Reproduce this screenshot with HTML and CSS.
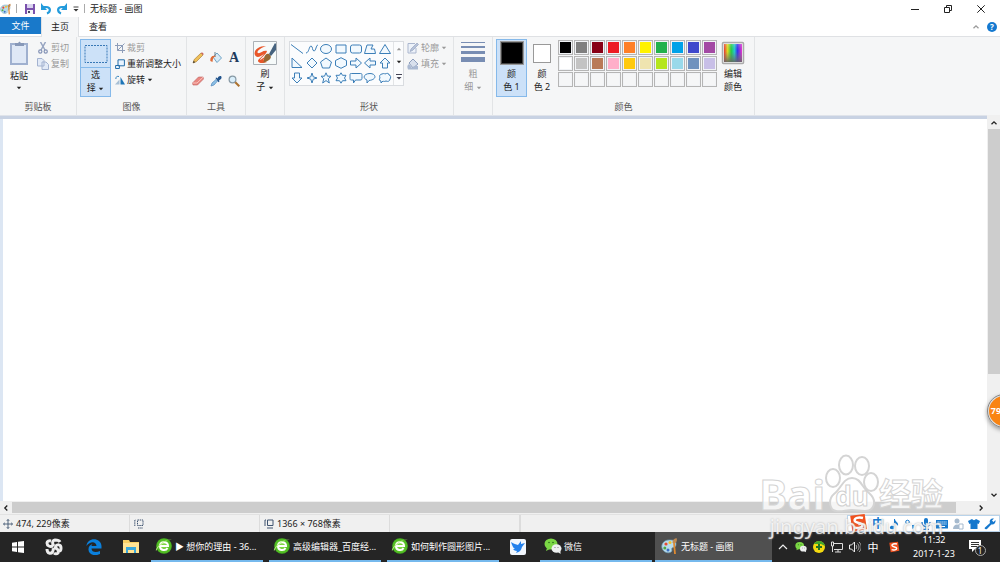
FILE: index.html
```html
<!DOCTYPE html>
<html lang="zh-CN">
<head>
<meta charset="utf-8">
<meta name="viewport" content="width=device-width, initial-scale=1">
<title>无标题 - 画图</title>
<link rel="stylesheet" href="styles.css">
</head>
<body>
<svg class="defs" aria-hidden="true">
  <defs>
    <linearGradient id="spectrum"><stop offset="0" stop-color="#e33"/><stop offset=".2" stop-color="#dd2"/><stop offset=".4" stop-color="#2c4"/><stop offset=".58" stop-color="#2cc"/><stop offset=".75" stop-color="#33e"/><stop offset="1" stop-color="#e3c"/></linearGradient>
    <linearGradient id="shade" x2="0" y2="1"><stop offset="0" stop-color="#fff" stop-opacity=".2"/><stop offset=".4" stop-color="#777" stop-opacity="0"/><stop offset="1" stop-color="#666" stop-opacity=".9"/></linearGradient>
    <radialGradient id="green"><stop offset="0" stop-color="#8fe04c"/><stop offset="1" stop-color="#45b51c"/></radialGradient>
    <symbol id="palette" viewBox="0 0 18 18">
      <path d="M8 3C3 3 0 7 1 11s6 6 9 4c2-1 0-3 1-4s4 0 4-4-4-4-7-4z" fill="#b8dcec" stroke="#6e9db8" stroke-width=".7"/>
      <circle cx="5" cy="7" r="1.600" fill="#e64a33"/><circle cx="9" cy="5.500" r="1.500" fill="#f3c22b"/><circle cx="3.800" cy="11" r="1.500" fill="#51a845"/><circle cx="7" cy="13" r="1.500" fill="#3a6fc5"/>
      <path d="M13 6l1 11" stroke="#e08b31" stroke-width="1.800"/><path d="M11.500 6c0-3 1-4 4-5 1 2 0 4-1 5z" fill="#c18a51"/>
    </symbol>
    <symbol id="browser" viewBox="0 0 18 18">
      <circle cx="9" cy="9" r="7.800" fill="url(#green)"/><path d="M5 9h8c0-5-8-5-8 0s6 5 7.500 2" fill="none" stroke="#fff" stroke-width="2"/><path d="M1 14C0 10 10 2 17 2c-4 0-12 4-16 12z" fill="#b8ef7d"/>
    </symbol>
    <symbol id="wechat" viewBox="0 0 18 18">
      <ellipse cx="7" cy="7" rx="6.500" ry="5.500" fill="#7bd745"/><path d="M3 11l-1 3 4-2z" fill="#7bd745"/><circle cx="5" cy="5.500" r=".8" fill="#276b18"/><circle cx="9" cy="5.500" r=".8" fill="#276b18"/>
      <ellipse cx="12.500" cy="11.500" rx="5" ry="4.300" fill="#eef0f0"/><path d="M14 15l2.500 2V14z" fill="#eef0f0"/><circle cx="11" cy="10.500" r=".6" fill="#777"/><circle cx="14" cy="10.500" r=".6" fill="#777"/>
    </symbol>
    <symbol id="sogou" viewBox="0 0 18 18">
      <path d="M2 2.500L15 1l2 13.500L4 17z" fill="#f0511f"/><path d="M13.500 4.500c-4-1-8 0-7.500 2.500s7 1.500 7 4-4 3-7.500 2" fill="none" stroke="#fff" stroke-width="2.200"/>
    </symbol>
    <symbol id="caret" viewBox="0 0 6 4"><path d="M.8.7h4.400L3 3.300z" fill="currentColor"/></symbol>
    <symbol id="up" viewBox="0 0 8 8"><path d="M1.500 5.300L4 2.800l2.500 2.500" fill="none" stroke="currentColor" stroke-width="1.300"/></symbol>
  </defs>
</svg>

<div class="app">
  <header class="titlebar">
    <div class="quick">
      <svg class="i12"><use href="#palette"/></svg>
      <span class="bar"></span>
      <button class="plain" aria-label="保存"><svg class="i12" viewBox="0 0 12 12"><path d="M1 1h10v10H1z" fill="#7b51ad"/><path d="M3 1h6v4H3z" fill="#d9d3ee"/><path d="M3 7h6v4H3z" fill="#f3f3f6"/><path d="M4 8h2v2H4z" fill="#484a60"/></svg></button>
      <button class="plain" aria-label="撤消"><svg class="i12" viewBox="0 0 12 12"><path d="M3 4h3c5 0 5 5 1 6.500" fill="none" stroke="#239bdc" stroke-width="2.200"/><path d="M1 0v7h6z" fill="#239bdc"/></svg></button>
      <button class="plain" aria-label="重做"><svg class="i12" viewBox="0 0 12 12"><path d="M9 4H6c-5 0-5 5-1 6.500" fill="none" stroke="#239bdc" stroke-width="2.200"/><path d="M11 0v7H5z" fill="#239bdc"/></svg></button>
      <button class="plain" aria-label="自定义快速访问工具栏"><svg class="i8" viewBox="0 0 8 8"><path d="M1.500 2h5" stroke="#444"/><path d="M1.500 4h5L4 6.500z" fill="#333"/></svg></button>
      <span class="bar"></span>
    </div>
    <h1 class="title">无标题 - 画图</h1>
    <div class="window-buttons">
      <button class="plain" aria-label="最小化"><svg class="i10" viewBox="0 0 10 10"><path d="M1 5.500h8" stroke="#222"/></svg></button>
      <button class="plain" aria-label="还原"><svg class="i10" viewBox="0 0 10 10"><path d="M1.500 3.500h5v5h-5zM3.500 3V1.500h5v5H7" fill="none" stroke="#222"/></svg></button>
      <button class="plain" aria-label="关闭"><svg class="i10" viewBox="0 0 10 10"><path d="M1.300 1.300l7.400 7.400M8.700 1.300L1.300 8.700" stroke="#222"/></svg></button>
    </div>
  </header>

  <nav class="tabs">
    <button class="tab file">文件</button>
    <button class="tab current">主页</button>
    <button class="tab">查看</button>
    <div class="tab-tools">
      <button class="plain muted" aria-label="折叠功能区"><svg class="i8"><use href="#up"/></svg></button>
      <button class="help" aria-label="帮助">?</button>
    </div>
  </nav>

  <section class="ribbon">
    <div class="group clipboard">
      <div class="tools">
        <button class="big paste"><svg class="i24" viewBox="0 0 24 24"><path d="M3 2h18v22H3z" fill="#9fb0cf"/><path d="M5 4h14v18H5z" fill="#dfe8f6"/><path d="M8 2h3l1.500-1.500L14 2h3v3H8z" fill="#8798b8"/></svg><span>粘贴</span><svg class="caret"><use href="#caret"/></svg></button>
        <div class="stack">
          <button class="row muted"><svg class="i12" viewBox="0 0 12 12"><path d="M3.500 0L8 8M8.500 0L4 8" stroke="#96a4c1" stroke-width="1.500"/><circle cx="3.300" cy="9.500" r="1.600" fill="none" stroke="#8392b5" stroke-width="1.200"/><circle cx="8.700" cy="9.500" r="1.600" fill="none" stroke="#8392b5" stroke-width="1.200"/></svg>剪切</button>
          <button class="row muted"><svg class="i12" viewBox="0 0 12 12"><path d="M.5.500H5L7 2.500V8H.5zM5 4h4l2.500 2.500v5H5z" fill="#e2eaf7" stroke="#a3b2d0"/></svg>复制</button>
        </div>
      </div>
      <h2>剪贴板</h2>
    </div>

    <div class="group image">
      <div class="tools">
        <button class="big selected split"><span class="face"><svg class="i24" viewBox="0 0 24 24"><path d="M1 3.500h22v17H1z" fill="none" stroke="#3878b6" stroke-dasharray="2 1"/></svg></span><span>选<br>择 <svg class="caret"><use href="#caret"/></svg></span></button>
        <div class="stack">
          <button class="row muted"><svg class="i10" viewBox="0 0 10 10"><path d="M2.500 0v7.500H10M0 2.500h7.500V10M9.500.5l-7 7" fill="none" stroke="#8d9db9"/></svg>裁剪</button>
          <button class="row"><svg class="i10" viewBox="0 0 10 10"><path d="M3 .8h6.400v6H3zM.6 6.500h3.800v3H.6z" fill="#e9f4ff" stroke="#236da8"/></svg>重新调整大小</button>
          <button class="row"><svg class="i10" viewBox="0 0 10 10"><path d="M5.500 2L10 9.500H5.500z" fill="#1c75b8"/><path d="M4.500 4.500v5H0z" fill="#a7bfd5"/><path d="M.8 4C1 1.500 2 1 4 1.500" fill="none" stroke="#3683bc"/></svg>旋转<svg class="caret"><use href="#caret"/></svg></button>
        </div>
      </div>
      <h2>图像</h2>
    </div>

    <div class="group toolset">
      <div class="tools tool-grid">
        <button class="plain" aria-label="铅笔"><svg class="i12" viewBox="0 0 12 12"><path d="M1 11l1.200-3.500L9 1l2 2-6.700 6.700z" fill="#efc05a" stroke="#a1742c" stroke-width=".6"/><path d="M1 11l.7-2.200 1.500 1.500z" fill="#333"/><path d="M9 1l2 2 .8-1L10 .2z" fill="#cc605b"/></svg></button>
        <button class="plain" aria-label="用颜色填充"><svg class="i12" viewBox="0 0 12 12"><path d="M3 5l4-4 4.500 5L7 10.500z" fill="#d9eaf5" stroke="#5090bb" stroke-width=".8"/><path d="M5 0v5" stroke="#67818e"/><path d="M.3 9C0 5 2 3 6 4 3 5 3 7 2.500 10z" fill="#df6b38"/></svg></button>
        <button class="plain letter" aria-label="文本">A</button>
        <button class="plain" aria-label="橡皮擦"><svg class="i12" viewBox="0 0 12 12"><path d="M.5 8l6-6H11l.5 2-6 6H1z" fill="#e98882" stroke="#be625e" stroke-width=".6"/><path d="M.5 8h4.500l6.200-6" fill="none" stroke="#fac1bb"/></svg></button>
        <button class="plain" aria-label="颜色选取器"><svg class="i12" viewBox="0 0 12 12"><path d="M1 11l1-3 4-3.500 1.500 1.500L4 10z" fill="#8cc0e6" stroke="#538abb" stroke-width=".7"/><path d="M5.500 3l1-.5 1 1C9-.5 13 1 11 4L9 5.500l.5 1-1 .8z" fill="#21538c"/></svg></button>
        <button class="plain" aria-label="放大镜"><svg class="i12" viewBox="0 0 12 12"><circle cx="4.500" cy="4.500" r="3.400" fill="#d9eefa" stroke="#8799a5" stroke-width="1.200"/><path d="M7.300 7.300l4 4" stroke="#ad722e" stroke-width="2"/></svg></button>
      </div>
      <h2>工具</h2>
    </div>

    <div class="group brush">
      <div class="tools">
        <button class="big"><svg class="i24" viewBox="0 0 24 24"><path d="M.5.500h23v23H.5z" fill="#f6fafa" stroke="#abb1b6"/><path d="M13 5C5 5 0 10 2 14s6 1 9-1c-2 3-6 5-6 7s5 3 9 1c-4-1-4-3-2-5-3 1-4 3-5 3 1-3 6-5 7-9-4-1-7 3-9 2s2-5 8-7z" fill="#e9572a"/><path d="M11 18c0-4 3-6 5-5s3 4 0 6-5 2-7 3c2-1 2-2 2-4z" fill="#956833"/><path d="M16 13l6-11 1 1v6l-5 6z" fill="#46637f"/></svg><span>刷<br>子 <svg class="caret"><use href="#caret"/></svg></span></button>
      </div>
      <h2></h2>
    </div>

    <div class="group shapes">
      <div class="tools">
        <div class="gallery">
          <div class="shape-grid">
            <button class="plain" aria-label="直线"><svg class="shape" viewBox="0 0 14 12"><path d="M1 1.500l12 9"/></svg></button>
            <button class="plain" aria-label="曲线"><svg class="shape" viewBox="0 0 14 12"><path class="open" d="M1 10c3 0 3-7 5-7s1 5 3 5 2-6 4-6"/></svg></button>
            <button class="plain" aria-label="椭圆形"><svg class="shape" viewBox="0 0 14 12"><ellipse cx="7" cy="6" rx="5.500" ry="4.500"/></svg></button>
            <button class="plain" aria-label="矩形"><svg class="shape" viewBox="0 0 14 12"><path d="M2 2h10v8H2z"/></svg></button>
            <button class="plain" aria-label="圆角矩形"><svg class="shape" viewBox="0 0 14 12"><rect x="1.500" y="2" width="11" height="8" rx="2"/></svg></button>
            <button class="plain" aria-label="多边形"><svg class="shape" viewBox="0 0 14 12"><path d="M4 2h6L8 6h3.500l1 4.500h-11z"/></svg></button>
            <button class="plain" aria-label="三角形"><svg class="shape" viewBox="0 0 14 12"><path d="M7 1.500l5.500 9h-11z"/></svg></button>
            <button class="plain" aria-label="直角三角形"><svg class="shape" viewBox="0 0 14 12"><path d="M2 1l10 9.500H2z"/></svg></button>
            <button class="plain" aria-label="菱形"><svg class="shape" viewBox="0 0 14 12"><path d="M7 1l5 5-5 5-5-5z"/></svg></button>
            <button class="plain" aria-label="五边形"><svg class="shape" viewBox="0 0 14 12"><path d="M7 1l5.500 4-2 6h-7l-2-6z"/></svg></button>
            <button class="plain" aria-label="六边形"><svg class="shape" viewBox="0 0 14 12"><path d="M7 .7l5.500 2.800v5L7 11.300 1.500 8.500v-5z"/></svg></button>
            <button class="plain" aria-label="右箭头"><svg class="shape" viewBox="0 0 14 12"><path d="M1.500 4H7V1l5.500 5L7 11V8H1.500z"/></svg></button>
            <button class="plain" aria-label="左箭头"><svg class="shape" viewBox="0 0 14 12"><path d="M12.500 4H7V1L1.500 6 7 11V8h5.500z"/></svg></button>
            <button class="plain" aria-label="上箭头"><svg class="shape" viewBox="0 0 14 12"><path d="M7 1l5 5H9.500v5h-5V6H2z"/></svg></button>
            <button class="plain" aria-label="下箭头"><svg class="shape" viewBox="0 0 14 12"><path d="M7 11l5-5H9.500V1h-5v5H2z"/></svg></button>
            <button class="plain" aria-label="四角星形"><svg class="shape" viewBox="0 0 14 12"><path d="M7 1l1.200 3.800L12 6 8.200 7.200 7 11 5.800 7.200 2 6l3.800-1.200z"/></svg></button>
            <button class="plain" aria-label="五角星形"><svg class="shape" viewBox="0 0 14 12"><path d="M7 .8l1.500 3.400H12L9.300 6.800l1 4.200L7 8.600 3.700 11l1-4.200L2 4.200h3.500z"/></svg></button>
            <button class="plain" aria-label="六角星形"><svg class="shape" viewBox="0 0 14 12"><path d="M7 .8l1.500 2.500H12L10.500 6 12 8.700H8.500L7 11.200 5.500 8.700H2L3.500 6 2 3.300h3.500z"/></svg></button>
            <button class="plain" aria-label="圆角矩形标注"><svg class="shape" viewBox="0 0 14 12"><path d="M3 1.500h8c2 0 2 0 2 3s0 3.500-2 3.500H6.500L4.500 11V8H3c-2 0-2 0-2-3.500s0-3 2-3z"/></svg></button>
            <button class="plain" aria-label="椭圆形标注"><svg class="shape" viewBox="0 0 14 12"><path d="M6 8.500L4 11V8C-1 6 1 1.500 7 1.500s7.500 6-1 7z"/></svg></button>
            <button class="plain" aria-label="云形标注"><svg class="shape" viewBox="0 0 14 12"><path d="M4 2c2-1 3 0 3 0 2-1 4-1 4 1 2 0 2 3 1 4 0 2-2 3-4 2-2 1-3 0-3 0l-2 2V9C1 9 1 7 2 6 1 4 2 2 4 2z"/></svg></button>
          </div>
          <div class="gallery-scroll">
            <button class="plain muted" aria-label="上一行"><svg class="caret flip"><use href="#caret"/></svg></button>
            <button class="plain" aria-label="下一行"><svg class="caret"><use href="#caret"/></svg></button>
            <button class="plain" aria-label="更多形状"><svg class="i8" viewBox="0 0 8 8"><path d="M1 1.500h6" stroke="#445"/><path d="M1.500 4h5L4 6.500z" fill="#445"/></svg></button>
          </div>
        </div>
        <div class="stack">
          <button class="row muted"><svg class="i12" viewBox="0 0 12 12"><path d="M8 1.500H1v9.500h8V6" fill="#edf2f9" stroke="#aab6ce"/><path d="M3 9.500L4 7l6-6 1.500 1.500-6 6z" fill="#b6c2d9" stroke="#8e9dba" stroke-width=".6"/></svg>轮廓<svg class="caret"><use href="#caret"/></svg></button>
          <button class="row muted"><svg class="i12" viewBox="0 0 12 12"><path d="M2 5l4-4 5 5-5 4z" fill="#d8e0ed" stroke="#8e9fbe"/><path d="M1 11.500h10V8H7L5 10 2 6C0 7 0 9 1 11.500z" fill="#aab9d2"/></svg>填充<svg class="caret"><use href="#caret"/></svg></button>
        </div>
      </div>
      <h2>形状</h2>
    </div>

    <div class="group size">
      <div class="tools">
        <button class="big muted"><svg class="i24" viewBox="0 0 24 24"><path d="M0 1h24v1H0zM0 5h24v2H0zM0 10h24v3H0zM0 16h24v5H0z" fill="#788db3"/></svg><span>粗<br>细 <svg class="caret"><use href="#caret"/></svg></span></button>
      </div>
      <h2></h2>
    </div>

    <div class="group colors">
      <div class="tools">
        <button class="big selected"><span class="well black"></span><span>颜<br>色 1</span></button>
        <button class="big second"><span class="well-box"><span class="well white"></span></span><span>颜<br>色 2</span></button>
        <div class="swatches">
          <button class="swatch c-black" aria-label="黑色"></button><button class="swatch c-gray" aria-label="灰色"></button><button class="swatch c-maroon" aria-label="深红色"></button><button class="swatch c-red" aria-label="红色"></button><button class="swatch c-orange" aria-label="橙色"></button><button class="swatch c-yellow" aria-label="黄色"></button><button class="swatch c-green" aria-label="绿色"></button><button class="swatch c-sky" aria-label="青绿色"></button><button class="swatch c-indigo" aria-label="靛蓝色"></button><button class="swatch c-purple" aria-label="紫色"></button>
          <button class="swatch c-white" aria-label="白色"></button><button class="swatch c-silver" aria-label="浅灰色"></button><button class="swatch c-brown" aria-label="褐色"></button><button class="swatch c-rose" aria-label="玫瑰色"></button><button class="swatch c-gold" aria-label="金色"></button><button class="swatch c-cream" aria-label="浅黄色"></button><button class="swatch c-lime" aria-label="酸橙色"></button><button class="swatch c-aqua" aria-label="淡青绿色"></button><button class="swatch c-steel" aria-label="蓝灰色"></button><button class="swatch c-lilac" aria-label="淡紫色"></button>
          <button class="swatch" aria-label="自定义 1"></button><button class="swatch" aria-label="自定义 2"></button><button class="swatch" aria-label="自定义 3"></button><button class="swatch" aria-label="自定义 4"></button><button class="swatch" aria-label="自定义 5"></button><button class="swatch" aria-label="自定义 6"></button><button class="swatch" aria-label="自定义 7"></button><button class="swatch" aria-label="自定义 8"></button><button class="swatch" aria-label="自定义 9"></button><button class="swatch" aria-label="自定义 10"></button>
        </div>
        <button class="big"><svg class="i24" viewBox="0 0 24 24"><rect x="1.500" y="1.500" width="21" height="21" rx="1" fill="#eee" stroke="#aaa" stroke-width="1.500"/><path d="M3 3h18v18H3z" fill="url(#spectrum)"/><path d="M3 3h18v18H3z" fill="url(#shade)"/></svg><span>编辑<br>颜色</span></button>
      </div>
      <h2>颜色</h2>
    </div>
  </section>

  <main class="workspace">
    <div class="canvas-area"><div class="canvas"></div></div>
    <div class="vscroll">
      <button class="plain" aria-label="向上滚动"><svg class="i8"><use href="#up"/></svg></button>
      <div class="vtrack"><div class="vthumb"></div></div>
      <button class="plain" aria-label="向下滚动"><svg class="i8 flip"><use href="#up"/></svg></button>
    </div>
    <div class="hscroll">
      <button class="plain" aria-label="向左滚动"><svg class="i8 left"><use href="#up"/></svg></button>
      <div class="htrack"><div class="hthumb"></div></div>
      <button class="plain" aria-label="向右滚动"><svg class="i8 right"><use href="#up"/></svg></button>
    </div>
    <button class="speed-ball">79</button>
  </main>

  <footer class="status">
    <div class="cell"><svg class="i10" viewBox="0 0 10 10"><path d="M5 .5v9M.5 5h9M3.800 1.800L5 .5l1.200 1.300M3.800 8.200L5 9.500l1.200-1.300M1.800 3.800L.5 5l1.300 1.200M8.200 3.800L9.500 5 8.200 6.200" fill="none" stroke="#405571" stroke-width=".9"/></svg>474, 229像素</div>
    <div class="cell"><svg class="i10" viewBox="0 0 10 10"><path d="M.8 7V1h1M3.500 1H9v5.500H3.500zM4 9h5" fill="none" stroke="#405571" stroke-dasharray="1.500 .7"/></svg></div>
    <div class="cell"><svg class="i10" viewBox="0 0 10 10"><path d="M1 7V1h1M3.500 1H9v5.500H3.500zM3 9h6" fill="none" stroke="#405571"/></svg>1366 × 768像素</div>
    <div class="cell"></div>
    <div class="cell last"></div>
    <div class="ime">
      <svg class="ime-logo"><use href="#sogou"/></svg>
      <button class="plain ime-text">中</button>
      <button class="plain" aria-label="全半角"><svg class="i12" viewBox="0 0 12 12"><path d="M7 1c0 3 4 3 3 7-1-2-2-2-3-2v3c0 3-6 3-5 0 1-2 3-1 4-1V1z" fill="#1678cd"/></svg></button>
      <button class="plain" aria-label="标点"><svg class="i12" viewBox="0 0 12 12"><circle cx="3.500" cy="4" r="1.800" fill="none" stroke="#1678cd"/><path d="M8 7h2.500c.5 2-.5 3-2 4z" fill="#1678cd"/></svg></button>
      <button class="plain" aria-label="语音"><svg class="i12" viewBox="0 0 12 12"><rect x="4" y="0" width="4" height="7" rx="2" fill="#1678cd"/><path d="M2 4c0 6 8 6 8 0M6 8v4M3 11.500h6" stroke="#1678cd" fill="none" stroke-width="1.300"/></svg></button>
      <button class="plain" aria-label="软键盘"><svg class="i12" viewBox="0 0 12 12"><path d="M0 2h12v8.500H0z" fill="#1678cd"/><path d="M1.500 4h9M1.500 6h9" stroke="#fff" stroke-dasharray="1.200 .8"/><path d="M3 8.500h6" stroke="#fff"/></svg></button>
      <button class="plain" aria-label="账户"><svg class="i12" viewBox="0 0 12 12"><circle cx="5" cy="3" r="2.500" fill="#a6bace"/><path d="M1 11c0-6 8-6 8 0z" fill="#a6bace"/><path d="M7 6h4v5H7z" fill="#fff" stroke="#a6bace"/></svg></button>
      <button class="plain" aria-label="皮肤"><svg class="i12" viewBox="0 0 12 12"><path d="M4 1c1 1.500 3 1.500 4 0l4 2-1.300 3L9.500 5.500V11h-7V5.500L1.300 6 0 3z" fill="#1678cd"/></svg></button>
      <button class="plain" aria-label="工具箱"><svg class="i12" viewBox="0 0 12 12"><path d="M1 9.500L6 5C5 2 7 0 10 .5L8 2.500 9.500 4l2-2C12 5 10 7 7.300 6.500L3 11c-2 1-3-1-2-1.500z" fill="#1678cd"/></svg></button>
    </div>
    <div class="watermark" aria-hidden="true">
      <div class="brand"><span>Bai</span><svg class="paw" viewBox="0 0 54 60"><g><ellipse cx="8" cy="24" rx="7" ry="9"/><ellipse cx="21" cy="11" rx="7" ry="9.500"/><ellipse cx="37" cy="12" rx="7" ry="9"/><ellipse cx="46" cy="28" rx="7" ry="9"/><path d="M27 24c9 0 10 10 17 15 9 8 5 18-4 18-7 0-6-1-13-1s-9 2-16 1C4 56 3 45 9 40c7-5 9-16 18-16z"/></g><text x="27" y="52" text-anchor="middle">du</text></svg><span class="cn">经验</span></div>
      <div class="site">jingyan.baidu.com</div>
    </div>
  </footer>

  <div class="taskbar">
    <button class="pin" aria-label="开始"><svg class="i14" viewBox="0 0 14 14"><path d="M1 2.800L6 2v4.500H1zM7 1.800L13 1v5.500H7zM1 7.500h5V12l-5-.8zM7 7.500h6V13l-6-.8z" fill="#fff"/></svg></button>
    <button class="pin" aria-label="浏览助手"><svg class="i18" viewBox="0 0 18 18"><g fill="none" stroke="#ededed" stroke-width="3"><path d="M8 8C5 9 2 8 2 5c0-2 2-2.500 4-2"/><path d="M9 8C7 6 7 2.500 10 2c2 0 4 0 5 2"/><path d="M10 9c2-3 6-3 6 1 0 2-1 3-2 3"/><path d="M9 10c4 0 5 3 4 5-1 1-3 1-4 0"/><path d="M8 10c1 3-1 6-4 5-1 0-2-2-2-4"/></g></svg></button>
    <button class="pin edge" aria-label="Microsoft Edge"><svg class="i16" viewBox="0 0 16 16"><path d="M.5 7C1-2 15-2 15.500 7v2.500H5.500c0 4 5 4 8.500 2.500v3C8 18 2 15 2.500 10c0-3 2-4 4-5-1 1-1 2-1 2h5C10 2 4 2 .5 7z" fill="#0b80dc"/></svg></button>
    <button class="pin folder" aria-label="文件资源管理器"><svg class="i16" viewBox="0 0 16 16"><path d="M0 1h6l1 2h9v11H0z" fill="#f7cf66"/><path d="M0 4h16v10H0z" fill="#ffe394"/><path d="M3 8h10v6h-2v-3H5v3H3z" fill="#3aa8dc"/></svg></button>
    <button class="task"><svg class="i18"><use href="#browser"/></svg><span>▶ 想你的理由 - 36...</span></button>
    <button class="task"><svg class="i18"><use href="#browser"/></svg><span>高级编辑器_百度经...</span></button>
    <button class="task"><svg class="i18"><use href="#browser"/></svg><span>如何制作圆形图片...</span></button>
    <button class="pin" aria-label="迅雷"><svg class="i18" viewBox="0 0 18 18"><rect x="1" y="1" width="16" height="16" rx="2" fill="#f2f7fd"/><path d="M2 4c3 2 5 2 7 3l3-4v3l4-1-3 4c-1 4-3 5-6 6l1-2c-2 0-3-1-4-2h2C4 10 3 7 2 4z" fill="#2381ec"/></svg></button>
    <button class="task"><svg class="i18"><use href="#wechat"/></svg><span>微信</span></button>
    <button class="task active"><svg class="i18"><use href="#palette"/></svg><span>无标题 - 画图</span></button>
    <div class="tray">
      <button class="plain" aria-label="显示隐藏的图标"><svg class="i12" viewBox="0 0 12 12"><path d="M2 8l4-4 4 4" fill="none" stroke="#eee" stroke-width="1.200"/></svg></button>
      <button class="plain" aria-label="微信"><svg class="i12"><use href="#wechat"/></svg></button>
      <button class="plain" aria-label="安全卫士"><svg class="i12" viewBox="0 0 12 12"><circle cx="6" cy="6" r="6" fill="#f4da10"/><path d="M1 3C4-2 11 0 12 5L8 3z" fill="#42a72c"/><path d="M6 3v6M3 6h6" stroke="#217325" stroke-width="2"/></svg></button>
      <button class="plain" aria-label="网络"><svg class="i12" viewBox="0 0 12 12"><path d="M3 2.500h8.500v6H3M7 9v2M4 11h6M.5 1h2v4h-2zM1.500 5v6" fill="none" stroke="#ddd"/></svg></button>
      <button class="plain" aria-label="音量"><svg class="i12" viewBox="0 0 12 12"><path d="M.5 4h2l3-3v10l-3-3h-2z" fill="none" stroke="#eee"/><path d="M7 4c1 1 1 3 0 4M8.500 2.500c2 2 2 5 0 7M10 1c3 3 3 7 0 10" fill="none" stroke="#aaa"/></svg></button>
      <button class="plain lang">中</button>
      <button class="plain" aria-label="搜狗输入法"><svg class="i12"><use href="#sogou"/></svg></button>
    </div>
    <div class="clock"><span>11:32</span><span>2017-1-23</span></div>
    <button class="notify" aria-label="通知"><svg class="i18" viewBox="0 0 18 18"><path d="M1 2h12v9H7l-3 3v-3H1z" fill="#fff"/><path d="M3 4.500h8M3 6.500h8M3 8.500h6" stroke="#333"/><circle cx="12.500" cy="12.500" r="5" fill="#252525" stroke="#aaa"/></svg><span class="count">1</span></button>
  </div>
</div>
</body>
</html>
```
FILE: styles.css
```css
* { box-sizing: border-box; }
body {
  margin: 0;
  font: 9px/13px "Noto Sans", "Noto Sans CJK SC", sans-serif;
  color: #222;
  background: #fff;
}
button { font: inherit; color: inherit; background: none; border: 0; padding: 0; margin: 0; }
h1, h2 { font: inherit; margin: 0; }
svg { display: block; flex: none; }
.defs { position: absolute; width: 0; height: 0; }
.i8 { width: 8px; height: 8px; }
.i10 { width: 10px; height: 10px; }
.i12 { width: 12px; height: 12px; }
.i14 { width: 14px; height: 14px; }
.i16 { width: 16px; height: 16px; }
.i18 { width: 18px; height: 18px; }
.i24 { width: 24px; height: 24px; }
.caret { display: inline-block; width: 6px; height: 4px; vertical-align: middle; }
.flip { transform: rotate(180deg); }
.left { transform: rotate(-90deg); }
.right { transform: rotate(90deg); }
.plain { display: flex; align-items: center; justify-content: center; }
.muted { color: #999; }

.app { display: flex; flex-direction: column; height: 100vh; overflow: hidden; }

.titlebar { display: flex; align-items: center; height: 17px; }
.quick { display: flex; align-items: center; gap: 4px; }
.bar { width: 1px; height: 9px; margin: 0 3px 0 0; background: #aaa; }
.quick .bar:last-child { margin: 0 5px 0 0; }
.title { flex: 1; }
.window-buttons { display: flex; gap: 23px; padding-right: 14px; }

.tabs { display: flex; height: 20px; border-bottom: 1px solid #dfe1e4; }
.tab { width: 38px; height: 18px; }
.tab.file { width: 41px; height: 17px; color: #fff; background: #1979ca; }
.tab.current { height: 20px; padding-bottom: 2px; background: #f5f6f7; border: solid #dfe1e4; border-width: 0 1px; }
.tab-tools { display: flex; align-items: center; gap: 7px; margin-left: auto; padding-right: 3px; }
.help { width: 10px; height: 10px; border-radius: 50%; color: #fff; background: #1479d0; font-weight: 700; font-size: 8px; line-height: 10px; }

.ribbon { display: flex; height: 78px; background: #f5f6f7; }
.group { display: flex; flex-direction: column; padding: 2px 2px 0; border-right: 1px solid #e2e4e6; }
.group h2 { height: 15px; text-align: center; color: #555; }
.tools { display: flex; flex: 1; align-items: flex-start; }
.clipboard { flex: 0 0 77px; }
.image { flex: 0 0 110px; }
.toolset { flex: 0 0 59px; }
.brush { flex: 0 0 39px; }
.shapes { flex: 0 0 169px; }
.size { flex: 0 0 39px; }
.colors { flex: 0 0 262px; }
.big { display: flex; flex-direction: column; align-items: center; width: 34px; height: 58px; padding-top: 2px; white-space: nowrap; }
.big > span:last-of-type { padding-top: 2px; }
.paste { gap: 4px; }
.paste > span:last-of-type { padding-top: 0; }
.selected { width: 31px; padding-top: 1px; border: 1px solid #85b9ea; background: #cce1f8; }
.split { margin-left: 1px; padding: 0; }
.split .face { display: flex; justify-content: center; width: 100%; padding: 2px 0 1px; border-bottom: 1px solid #85b9ea; }
.split > span:last-of-type { padding-top: 0; }
.stack { display: flex; flex-direction: column; gap: 3px; padding: 2px 0 0 1px; }
.row { display: flex; align-items: center; gap: 2px; height: 13px; white-space: nowrap; }
.image .stack { padding-left: 4px; }

.tool-grid { display: grid; grid-template-columns: repeat(3, 1fr); grid-auto-rows: 23px; align-items: center; padding-top: 7px; }
.letter { font: 700 14px/14px "Liberation Serif", serif; color: #203a5c; }

.gallery { display: flex; width: 115px; height: 45px; margin: 2px 2px 0; border: 1px solid #d9dce0; background: #fbfcfd; }
.shape-grid { display: grid; flex: 1; grid-template-columns: repeat(7, 1fr); padding-right: 1px; }
.shape { width: 14px; height: 12px; fill: #f2f9fe; stroke: #3c7fb8; stroke-width: 1; }
.shape .open { fill: none; }
.gallery-scroll { display: grid; width: 10px; border-left: 1px solid #e2e4e6; }

.colors .tools { padding-left: 1px; }
.well { display: block; width: 24px; height: 24px; border: 1px solid #999; box-shadow: inset 0 0 0 1px #fff; }
.well-box { display: grid; place-items: center; height: 24px; }
.black { background: #000; box-shadow: inset 0 0 0 1px #444; }
.white { width: 18px; height: 19px; background: #fff; }
.second { width: 30px; }
.swatches { display: grid; grid-template-columns: repeat(10, 15px); grid-auto-rows: 15px; gap: 1px; padding: 1px 2px 0 1px; }
.swatch { border: 1px solid #b5b5b5; box-shadow: inset 0 0 0 1px #f1f3f6; }
.colors .tools > .big:last-child { width: 28px; }
.c-black { background: #000; }
.c-gray { background: #7f7f7f; }
.c-maroon { background: #880015; }
.c-red { background: #ed1c24; }
.c-orange { background: #ff7f27; }
.c-yellow { background: #fff200; }
.c-green { background: #22b14c; }
.c-sky { background: #00a2e8; }
.c-indigo { background: #3f48cc; }
.c-purple { background: #a349a4; }
.c-white { background: #fff; }
.c-silver { background: #c3c3c3; }
.c-brown { background: #b97a57; }
.c-rose { background: #ffaec9; }
.c-gold { background: #ffc90e; }
.c-cream { background: #efe4b0; }
.c-lime { background: #b5e61d; }
.c-aqua { background: #99d9ea; }
.c-steel { background: #7092be; }
.c-lilac { background: #c8bfe7; }

.workspace { position: relative; display: grid; flex: 1; min-height: 0; grid-template: 1fr 13px / 1fr 13px; }
.canvas-area { display: flex; padding: 3px 0 0 3px; border-top: 1px solid #dfe3ea; background: linear-gradient(#c8d2e3 0 3px, #dce6f3 3px); }
.canvas { flex: 1; background: #fff; }
.vscroll { display: flex; flex-direction: column; align-items: center; padding: 2px 0 0 1px; background: #f0f0f0; }
.vscroll button, .hscroll button { flex: 0 0 12px; height: 11px; }
.vtrack { flex: 1; width: 12px; }
.vthumb { height: 68%; background: #cdcdcd; }
.hscroll { grid-column: 1 / -1; display: flex; align-items: center; padding-right: 13px; background: #f0f0f0; }
.htrack { flex: 1; height: 11px; }
.hthumb { width: 98%; height: 11px; background: #cdcdcd; }
.speed-ball { position: absolute; right: -21px; bottom: 86px; width: 34px; height: 34px; padding: 0 16px 0 0; border: 2px solid #ddd; outline: 1px solid #888; outline-offset: -1px; border-radius: 50%; color: #fff; background: #f98413; box-shadow: 0 2px 4px #999; font-weight: 700; line-height: 12px; }

.status { position: relative; display: flex; height: 18px; border-top: 1px solid #e2e2e2; background: #f0f0f0; }
.cell { display: flex; align-items: center; gap: 3px; flex: 0 0 130px; padding-left: 3px; border-right: 1px solid #dcdcdc; }
.cell + .cell { padding-left: 4px; }
.last { border: 0; border-left: 1px solid #dcdcdc; }
.ime { position: absolute; right: 0; top: 0; display: flex; align-items: center; gap: 4px; height: 17px; padding: 0 3px 0 24px; border: 1px solid #b9d3ea; background: #fff; }
.ime-logo { position: absolute; left: 0; top: -3px; width: 20px; height: 20px; }
.ime-text { width: 12px; color: #1678cd; font-weight: 700; font-size: 12px; }

.watermark { position: absolute; z-index: 1; right: 57px; bottom: -8px; color: rgba(255, 255, 255, .8); pointer-events: none; }
.brand { display: flex; align-items: flex-end; justify-content: flex-end; font-size: 42px; font-weight: 700; line-height: 40px; -webkit-text-stroke: 1px #d4d4d4; }
.brand .cn { font-size: 32px; }
.paw { width: 54px; height: 60px; }
.paw g { fill: rgba(255, 255, 255, .8); stroke: #d4d4d4; stroke-width: 2; }
.paw text { font-size: 26px; fill: #fff; stroke: #d0d0d0; }
.site { font-size: 20px; line-height: 26px; text-align: right; text-shadow: 0 0 2px #aaa; }

.taskbar { display: flex; align-items: stretch; height: 30px; color: #fff; background: #252525; }
.pin { display: flex; align-items: center; justify-content: center; flex: 0 0 36px; }
.edge { flex-basis: 44px; }
.folder { flex-basis: 30px; }
.task { display: flex; align-items: center; gap: 2px; flex: 0 0 112px; margin: 0 1px 0 5px; padding-left: 4px; border-bottom: 2px solid #76b9ed; white-space: nowrap; overflow: hidden; }
.task + .pin { flex-basis: 35px; }
.active { flex-basis: 117px; padding-left: 6px; margin: 0 0 0 2px; background: #505050; }
.tray { display: flex; gap: 6px; margin-left: auto; }
.tray button:last-child { margin-left: 3px; }
.lang { width: 12px; font-size: 11px; }
.clock { display: flex; flex-direction: column; justify-content: center; align-items: center; width: 68px; line-height: 14px; }
.notify { position: relative; display: grid; align-items: center; width: 32px; }
.count { position: absolute; left: 7px; top: 14px; width: 10px; font-size: 8px; line-height: 10px; text-align: center; }
```
